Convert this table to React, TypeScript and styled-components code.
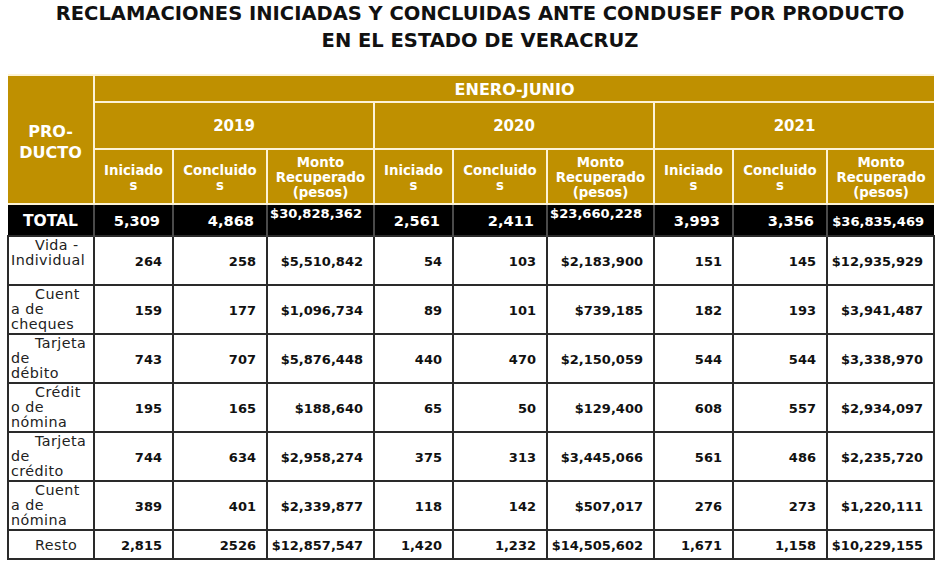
import React from "react";
import styled, { createGlobalStyle } from "styled-components";

const GlobalStyle = createGlobalStyle`
  html, body { margin: 0; padding: 0; background: #ffffff; }
  body { font-family: "DejaVu Sans", sans-serif; color: #000; }
`;

const GOLD = "#bf9000";
const CREAM = "#fdf3d6";
const LINE = "#2a2a2a";

const Page = styled.div`
  width: 938px;
  height: 566px;
  overflow: hidden;
  display: flex;
  flex-direction: column;
  align-items: flex-start;
`;

const Title = styled.h1`
  margin: 0;
  width: 938px;
  padding-left: 22px;
  box-sizing: border-box;
  text-align: center;
  font-family: "DejaVu Sans", sans-serif;
  font-weight: 700;
  font-size: 19.5px;
  line-height: 27px;
  color: #111;
  white-space: nowrap;
`;

const TableWrap = styled.div`
  margin-top: 20px;
  margin-left: 7px;
`;

const Table = styled.table`
  border-collapse: collapse;
  table-layout: fixed;
  width: 925px;
  border-top: 2px solid ${CREAM};
`;

const Head = styled.th<{ $size?: number; $lh?: number; $pt?: number }>`
  background: ${GOLD};
  color: #fff;
  font-weight: 700;
  font-size: ${(p) => p.$size ?? 13.3}px;
  line-height: ${(p) => p.$lh ?? 15}px;
  text-align: center;
  vertical-align: middle;
  padding: ${(p) => p.$pt ?? 0}px 2px 0;
  border: 2px solid ${CREAM};
  border-top: none;
  &:first-child { border-left: none; }
  &:last-child { border-right: none; }
`;

const HeadRow = styled.tr<{ $h: number }>`
  height: ${(p) => p.$h}px;
`;

const TotalRow = styled.tr`
  height: 32px;
  background: #000;
`;

const TotalLabel = styled.td`
  color: #fff;
  font-weight: 700;
  font-size: 15.5px;
  text-align: center;
  vertical-align: middle;
  padding: 1px 0 0;
  border-right: 2px solid #4a4a4a;
`;

const TotalCell = styled.td<{ $top?: boolean; $money?: boolean }>`
  color: #fff;
  font-weight: 700;
  font-size: ${(p) => (p.$money ? 13.1 : 14.6)}px;
  text-align: right;
  vertical-align: ${(p) => (p.$top ? "top" : "middle")};
  padding: ${(p) => (p.$top ? "1px 11px 0 0" : p.$money ? "2px 10px 0 0" : "1px 12px 0 0")};
  border-right: 2px solid #4a4a4a;
  &:last-child { border-right: none; }
`;

const DataRow = styled.tr<{ $h: number }>`
  height: ${(p) => p.$h}px;
`;

const Label = styled.td<{ $single?: boolean }>`
  font-family: "DejaVu Sans", sans-serif;
  font-weight: 400;
  font-size: 14.3px;
  letter-spacing: 0.45px;
  line-height: 15px;
  color: #222;
  vertical-align: ${(p) => (p.$single ? "middle" : "top")};
  padding: ${(p) => (p.$single ? "1px 0 0 2px" : "1px 0 0 2px")};
  border: 2px solid ${LINE};
`;

const LabelLine = styled.span<{ $first?: boolean }>`
  display: block;
  padding-left: ${(p) => (p.$first ? 24 : 0)}px;
  white-space: nowrap;
`;

const Num = styled.td`
  font-weight: 700;
  font-size: 13px;
  color: #111;
  text-align: right;
  vertical-align: middle;
  padding: 1px 10px 0 0;
  border: 2px solid ${LINE};
`;

const years = ["2019", "2020", "2021"];

const totals: { v: string; money?: boolean; top?: boolean }[] = [
  { v: "5,309" },
  { v: "4,868" },
  { v: "$30,828,362", money: true, top: true },
  { v: "2,561" },
  { v: "2,411" },
  { v: "$23,660,228", money: true, top: true },
  { v: "3,993" },
  { v: "3,356" },
  { v: "$36,835,469", money: true },
];

const rows: { label: string[]; values: string[]; h: number }[] = [
  { label: ["Vida -", "Individual"], h: 49, values: ["264", "258", "$5,510,842", "54", "103", "$2,183,900", "151", "145", "$12,935,929"] },
  { label: ["Cuent", "a de", "cheques"], h: 49, values: ["159", "177", "$1,096,734", "89", "101", "$739,185", "182", "193", "$3,941,487"] },
  { label: ["Tarjeta", "de", "débito"], h: 49, values: ["743", "707", "$5,876,448", "440", "470", "$2,150,059", "544", "544", "$3,338,970"] },
  { label: ["Crédit", "o de", "nómina"], h: 49, values: ["195", "165", "$188,640", "65", "50", "$129,400", "608", "557", "$2,934,097"] },
  { label: ["Tarjeta", "de", "crédito"], h: 49, values: ["744", "634", "$2,958,274", "375", "313", "$3,445,066", "561", "486", "$2,235,720"] },
  { label: ["Cuent", "a de", "nómina"], h: 49, values: ["389", "401", "$2,339,877", "118", "142", "$507,017", "276", "273", "$1,220,111"] },
  { label: ["Resto"], h: 29, values: ["2,815", "2526", "$12,857,547", "1,420", "1,232", "$14,505,602", "1,671", "1,158", "$10,229,155"] },
];

export default function App() {
  return (
    <Page>
      <GlobalStyle />
      <Title>
        RECLAMACIONES INICIADAS Y CONCLUIDAS ANTE CONDUSEF POR PRODUCTO
        <br />
        EN EL ESTADO DE VERACRUZ
      </Title>
      <TableWrap>
        <Table>
          <colgroup>
            <col style={{ width: 86 }} />
            {years.map((y) => (
              <React.Fragment key={y}>
                <col style={{ width: 79 }} />
                <col style={{ width: 94 }} />
                <col style={{ width: 107 }} />
              </React.Fragment>
            ))}
          </colgroup>
          <thead>
            <HeadRow $h={27}>
              <Head rowSpan={3} $size={16} $lh={21} $pt={4}>
                PRO-
                <br />
                DUCTO
              </Head>
              <Head colSpan={9} $size={16} $pt={1}>
                ENERO-JUNIO
              </Head>
            </HeadRow>
            <HeadRow $h={47}>
              {years.map((y) => (
                <Head key={y} colSpan={3} $size={15} $pt={1}>
                  {y}
                </Head>
              ))}
            </HeadRow>
            <HeadRow $h={55}>
              {years.map((y) => (
                <React.Fragment key={y}>
                  <Head $pt={3}>
                    Iniciado
                    <br />s
                  </Head>
                  <Head $pt={3}>
                    Concluido
                    <br />s
                  </Head>
                  <Head $pt={2}>
                    Monto
                    <br />
                    Recuperado
                    <br />
                    (pesos)
                  </Head>
                </React.Fragment>
              ))}
            </HeadRow>
          </thead>
          <tbody>
            <TotalRow>
              <TotalLabel>TOTAL</TotalLabel>
              {totals.map((t, i) => (
                <TotalCell key={i} $money={t.money} $top={t.top}>
                  {t.v}
                </TotalCell>
              ))}
            </TotalRow>
            {rows.map((r) => (
              <DataRow key={r.label.join("")} $h={r.h}>
                <Label $single={r.label.length === 1}>
                  {r.label.map((l, i) => (
                    <LabelLine key={i} $first={i === 0}>
                      {l}
                    </LabelLine>
                  ))}
                </Label>
                {r.values.map((v, i) => (
                  <Num key={i}>{v}</Num>
                ))}
              </DataRow>
            ))}
          </tbody>
        </Table>
      </TableWrap>
    </Page>
  );
}
